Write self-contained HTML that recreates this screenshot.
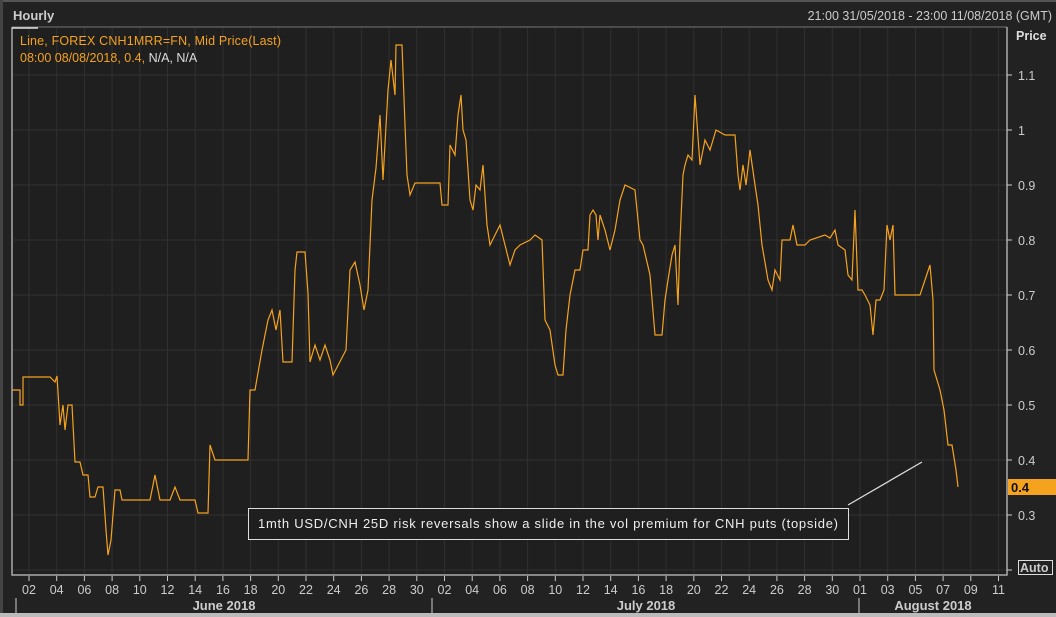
<!DOCTYPE html><html><head><style>
body{margin:0;width:1056px;height:617px;background:#222;overflow:hidden;font-family:"Liberation Sans",sans-serif}
</style></head><body>
<svg width="1056" height="617" xmlns="http://www.w3.org/2000/svg" style="position:absolute;left:0;top:0">
<rect width="1056" height="617" fill="#222"/>
<rect x="12" y="27" width="995" height="548" fill="#1f1f1f"/>
<rect x="0" y="0" width="1056" height="2" fill="#555"/>
<rect x="0" y="0" width="3" height="617" fill="#444"/>
<line x1="12" y1="27" x2="1007" y2="27" stroke="#777" stroke-width="1"/>
<g stroke="#303030" stroke-width="1" id="grid"></g>
<polyline points="12,27 12,575 1007,575 1007,27" fill="none" stroke="#aaa" stroke-width="1.5"/>
<line x1="12" y1="28" x2="38" y2="28" stroke="#ddd" stroke-width="1.5"/>
<line x1="848" y1="505" x2="922" y2="462" stroke="#ddd" stroke-width="1.3"/>
<polyline fill="none" stroke="#f5a21e" stroke-width="1.2" points="12,390 20,390 20,405 23,405 23,377 50,377 55,382 57,376 60,425 63,405 65,430 68,405 72,405 75,462 80,462 83,475 88,475 90,497 95,497 98,487 103,487 106,530 108,555 111,540 115,490 120,490 122,500 150,500 155,475 158,490 160,500 170,500 175,487 180,500 195,500 198,513 208,513 210,445 215,460 248,460 250,390 255,390 262,350 268,320 272,310 276,330 280,310 283,362 292,362 295,270 297,252 305,252 308,293 310,362 315,345 320,360 325,345 330,360 333,375 346,350 350,270 355,262 360,285 364,310 368,290 372,200 376,168 380,115 383,180 388,90 391,60 395,95 396,45 402,45 405,125 407,175 410,195 415,183 440,183 442,205 448,205 450,145 455,155 458,115 461,95 463,130 466,140 470,200 473,210 476,185 480,190 483,165 487,225 490,245 495,235 500,225 505,245 510,265 515,250 520,245 530,240 535,235 542,240 545,320 550,330 555,365 558,375 563,375 566,330 570,295 575,270 580,270 583,250 588,250 590,215 593,210 596,215 598,240 600,215 605,230 610,250 615,230 620,200 625,185 635,190 638,220 640,240 643,245 650,275 655,335 662,335 665,300 668,280 672,255 675,245 678,305 680,240 683,175 685,165 688,155 692,160 695,95 700,165 705,140 710,150 716,130 725,135 735,135 738,175 740,190 743,165 746,185 750,150 755,185 758,205 762,245 768,280 772,290 775,270 780,280 782,240 790,240 793,225 797,245 805,245 810,240 825,235 830,238 835,230 838,245 845,250 848,275 852,280 855,210 858,290 862,290 865,295 870,305 873,335 876,300 880,300 884,290 887,225 890,240 893,225 895,295 920,295 930,265 933,300 934,370 940,390 944,410 948,445 952,445 956,470 958,487"/>
<text x="13" y="20" fill="#ccc" font-size="13" font-weight="bold">Hourly</text>
<text x="1052" y="20" fill="#ccc" font-size="12.5" text-anchor="end">21:00 31/05/2018 - 23:00 11/08/2018 (GMT)</text>
<text x="20" y="45" fill="#f5a21e" font-size="12.5" textLength="261">Line, FOREX CNH1MRR=FN, Mid Price(Last)</text>
<text x="20" y="62" fill="#f5a21e" font-size="12.5">08:00 08/08/2018, 0.4, <tspan fill="#ddd">N/A, N/A</tspan></text>
<text x="1016" y="40" fill="#ddd" font-size="12.5" font-weight="bold">Price</text>
<g fill="#ccc" font-size="12.5" id="ylab"></g>
<rect x="1008" y="479" width="48" height="16" fill="#f5a21e"/>
<text x="1011" y="492" fill="#111" font-size="13" font-weight="bold">0.4</text>
<rect x="1018.5" y="560.5" width="34" height="14" fill="none" stroke="#ddd"/>
<text x="1020" y="572" fill="#ccc" font-size="12.5" font-weight="bold">Auto</text>
<rect x="248.5" y="508.5" width="600" height="31" fill="#1f1f1f" stroke="#ddd"/>
<text x="258" y="528" fill="#eee" font-size="13" textLength="580">1mth USD/CNH 25D risk reversals show a slide in the vol premium for CNH puts (topside)</text>
<g fill="#ccc" font-size="12.5" text-anchor="middle" id="xlab"></g>
<line x1="16" y1="598" x2="16" y2="613" stroke="#ccc"/>
<line x1="432" y1="598" x2="432" y2="613" stroke="#ccc"/>
<line x1="859" y1="598" x2="859" y2="613" stroke="#ccc"/>
<g fill="#ccc" font-size="13" font-weight="bold" text-anchor="middle">
<text x="224" y="610">June 2018</text><text x="646" y="610">July 2018</text><text x="933" y="610">August 2018</text></g>
<rect x="0" y="613" width="1056" height="4" fill="#bbb"/>
</svg>
<script>
var ns="http://www.w3.org/2000/svg",g=document.getElementById('grid'),xl=document.getElementById('xlab'),yl=document.getElementById('ylab');
function el(p,t,a){var e=document.createElementNS(ns,t);for(var k in a)e.setAttribute(k,a[k]);p.appendChild(e);return e;}
var labs=["02","04","06","08","10","12","14","16","18","20","22","24","26","28","30","02","04","06","08","10","12","14","16","18","20","22","24","26","28","30","01","03","05","07","09","11"];
for(var i=0;i<labs.length;i++){var x=29+i*27.7;
el(g,'line',{x1:x,y1:28,x2:x,y2:574});
el(document.querySelector('svg'),'line',{x1:x,y1:576,x2:x,y2:581,stroke:'#ccc'});
el(xl,'text',{x:x,y:594}).textContent=labs[i];}
for(var p=2;p<=11;p++){var y=515-(p/10-0.3)*550;
el(g,'line',{x1:13,y1:y,x2:1006,y2:y});
el(document.querySelector('svg'),'line',{x1:1007,y1:y,x2:1012,y2:y,stroke:'#ccc'});
if(p>=3&&p!=4)el(yl,'text',{x:1018,y:y+5}).textContent=(p==10?"1":(p/10).toString());}
el(yl,'text',{x:1018,y:465}).textContent="0.4";
</script>
</body></html>
